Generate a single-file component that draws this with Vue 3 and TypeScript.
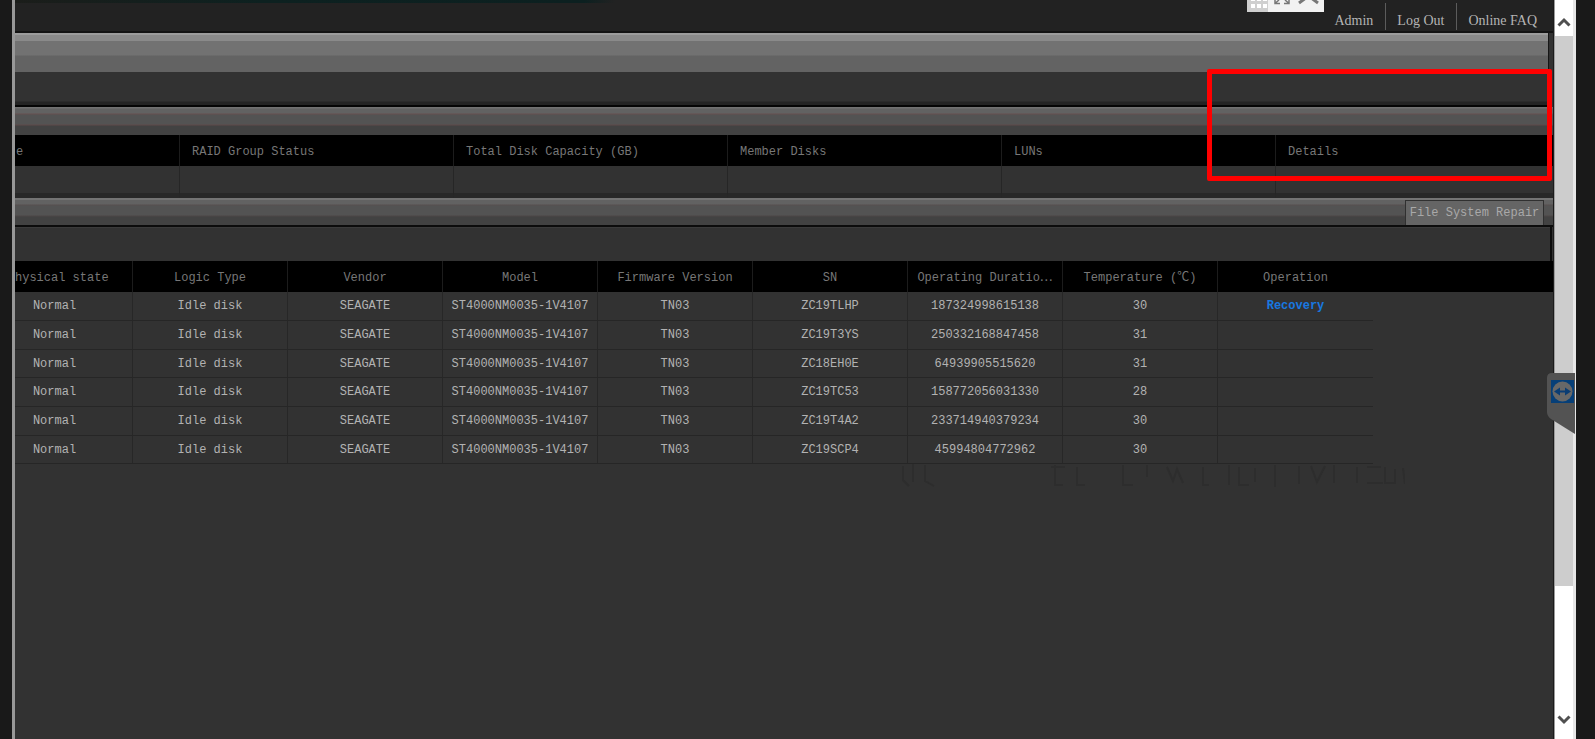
<script setup lang="ts">
interface Disk {
  state: string
  logic: string
  vendor: string
  model: string
  firmware: string
  sn: string
  duration: string
  temperature: number
  recoverable?: boolean
}

const base = { state: 'Normal', logic: 'Idle disk', vendor: 'SEAGATE', model: 'ST4000NM0035-1V4107', firmware: 'TN03' }

const disks: Disk[] = [
  { ...base, sn: 'ZC19TLHP', duration: '187324998615138', temperature: 30, recoverable: true },
  { ...base, sn: 'ZC19T3YS', duration: '250332168847458', temperature: 31 },
  { ...base, sn: 'ZC18EH0E', duration: '64939905515620', temperature: 31 },
  { ...base, sn: 'ZC19TC53', duration: '158772056031330', temperature: 28 },
  { ...base, sn: 'ZC19T4A2', duration: '233714940379234', temperature: 30 },
  { ...base, sn: 'ZC19SCP4', duration: '45994804772962', temperature: 30 },
]

const groupColumns = ['e', 'RAID Group Status', 'Total Disk Capacity (GB)', 'Member Disks', 'LUNs', 'Details']
const diskColumns = [
  'hysical state', 'Logic Type', 'Vendor', 'Model', 'Firmware Version', 'SN',
  'Operating Duratio⋯', 'Temperature (℃)', 'Operation', '',
]
</script>

<template>
  <div class="screen">
    <div class="window">
      <main class="content">
        <header class="topbar">
          <nav class="links">
            <a href="#">Admin</a>
            <a href="#">Log Out</a>
            <a href="#">Online FAQ</a>
          </nav>
        </header>
        <div class="banner"></div>
        <div class="spacer first"></div>

        <div class="bar"></div>
        <table class="groups">
          <thead>
            <tr><th v-for="c in groupColumns" :key="c">{{ c }}</th></tr>
          </thead>
          <tbody>
            <tr><td v-for="c in groupColumns" :key="c"></td></tr>
          </tbody>
        </table>

        <div class="bar with-tab"><button type="button" class="repair">File System Repair</button></div>
        <div class="spacer second"></div>
        <table class="disks">
          <thead>
            <tr><th v-for="c in diskColumns" :key="c">{{ c }}</th></tr>
          </thead>
          <tbody>
            <tr v-for="d in disks" :key="d.sn">
              <td>{{ d.state }}</td>
              <td>{{ d.logic }}</td>
              <td>{{ d.vendor }}</td>
              <td>{{ d.model }}</td>
              <td>{{ d.firmware }}</td>
              <td>{{ d.sn }}</td>
              <td>{{ d.duration }}</td>
              <td>{{ d.temperature }}</td>
              <td><a v-if="d.recoverable" href="#" class="recovery">Recovery</a></td>
              <td></td>
            </tr>
          </tbody>
        </table>
        <svg class="residue" width="520" height="32" viewBox="0 0 520 32" aria-hidden="true">
          <path d="M18 6v14l6 6M28 4v18M40 5v16l9 5M170 5v20h8M166 7h14M192 7v18h8M238 5v20h10M262 5v12M282 7l6 14 4-12 6 14M318 7v18h6M344 5v20M354 7v18h10M370 8v14M390 5v22M414 6v18M426 6l6 16 8-16M449 5v18M472 7v16M482 7h14M482 23h16M500 7v16h10v-14M518 8l2 16" />
        </svg>
      </main>

      <div class="scrollbar">
        <button type="button" aria-label="Scroll up">
          <svg width="14" height="12" viewBox="0 0 14 12"><path d="M1.500 9.500L7 4L12.500 9.500" /></svg>
        </button>
        <div class="track"><div class="thumb"></div></div>
        <button type="button" aria-label="Scroll down">
          <svg width="14" height="12" viewBox="0 0 14 12"><path d="M1.500 2.500L7 8L12.500 2.500" /></svg>
        </button>
      </div>
    </div>

    <svg class="remote-tools" width="77" height="12" viewBox="0 0 77 12" aria-hidden="true">
      <rect width="77" height="12" fill="#f2f2f2" />
      <rect width="21" height="12" fill="#cfcfcf" />
      <g fill="#fff">
        <rect x="4" y="-3" width="4" height="4" /><rect x="10" y="-3" width="4" height="4" /><rect x="16" y="-3" width="4" height="4" />
        <rect x="4" y="4" width="4" height="4" /><rect x="10" y="4" width="4" height="4" /><rect x="16" y="4" width="4" height="4" />
      </g>
      <path d="M28 -1V3.500H33M28.500 3L32 0M42 -1V3.500H37M41.500 3L38 0" fill="none" stroke="#777" stroke-width="1.500" />
      <path d="M52 3L61.500 -4L71 3" fill="none" stroke="#777" stroke-width="3" />
    </svg>

    <svg class="remote-tab" width="28" height="61" viewBox="0 0 28 61" aria-hidden="true">
      <path d="M5 0H28V61L4 46Q0 43 0 39V5Q0 0 5 0Z" fill="#535353" />
      <rect x="4" y="7" width="23" height="23" fill="#063f78" />
      <circle cx="15.500" cy="18.500" r="10" fill="#686868" />
      <path d="M7 18.500L13 14.500V17.500H18V14.500L24 18.500L18 22.500V19.500H13V22.500Z" fill="#0a3d74" />
    </svg>

    <div class="highlight"></div>
  </div>
</template>

<style>
body { background: #191919; }
</style>

<style scoped>
.screen {
  position: relative;
  height: 100vh;
  padding: 0 19px 0 12px;
  box-sizing: border-box;
  overflow: hidden;
  background: #191919;
  font-family: "Liberation Mono", "Noto Sans CJK SC", monospace;
  font-size: 12px;
}
.window {
  display: flex;
  height: 100%;
  box-sizing: border-box;
  border-left: 3px solid #989898;
  background: #323232;
}
.content {
  flex: 1;
  min-width: 0;
  overflow: hidden;
  border-right: 1px solid #1b1b1b;
}
.topbar {
  display: flex;
  justify-content: flex-end;
  height: 33px;
  box-sizing: border-box;
  padding: 3px 4px 0 0;
  border-bottom: 2px solid #131313;
  background: linear-gradient(90deg, #1b1d1a, #0d2120 16%, #0c2020 37%, #222 39%) 0 0 / 100% 3px no-repeat, #222;
}
.links { display: flex; height: 27px; }
.links a {
  padding: 0 12px 0 11px;
  color: #b4b4b4;
  font-family: "Liberation Serif", serif;
  font-size: 14px;
  line-height: 36px;
  text-decoration: none;
  white-space: nowrap;
}
.links a + a { border-left: 1px solid #5c5c5c; }
.banner {
  height: 39px;
  margin-right: 4px;
  border-right: 1px solid #161616;
  background: linear-gradient(#9c9c9c 2px, #8a8a8a 2px 8px, #727272 8px 22px, #636363 23px);
}
.spacer {
  box-sizing: border-box;
  margin-right: 1px;
  border-right: 2px solid #0c0c0c;
}
.spacer.first {
  height: 35px;
  background: linear-gradient(#323232 29px, #242424 30px 33px, #050505 33px);
}
.spacer.second {
  height: 34px;
  background: linear-gradient(#3b3b3b 1px, #323232 1px);
}
.bar {
  display: flex;
  justify-content: flex-end;
  height: 28px;
  box-sizing: border-box;
  background: linear-gradient(#727272 1px, #626262 2px 6px, #664f4f 7px, #535353 8px 17px, #5e4949 18px, #424242 19px);
}
.bar.with-tab {
  height: 29px;
  padding: 2px 9px 0 0;
  border-bottom: 2px solid #0c0c0c;
  background: linear-gradient(#747474 2px, #626262 2px 6px, #574f4f 7px, #535353 8px 17px, #4c4646 18px, #424242 19px);
}
.repair {
  width: 139px;
  height: 25px;
  padding: 0;
  border: 1px solid #303030;
  border-bottom: 0;
  background: #656565;
  color: #a9a9a9;
  font: inherit;
  white-space: nowrap;
}
table {
  table-layout: fixed;
  width: 100%;
  border-collapse: separate;
  border-spacing: 0;
  line-height: 14px;
}
th, td {
  box-sizing: border-box;
  padding: 0;
  white-space: nowrap;
}
th {
  padding-top: 2px;
  background: #000;
  color: #777;
  font-weight: 400;
}
.groups th {
  width: 274px;
  height: 31px;
  padding-left: 12px;
  text-align: left;
  border-left: 1px solid #1c1c1c;
}
.groups td {
  height: 32px;
  border-left: 1px solid #262626;
  border-bottom: 5px solid #282828;
}
.groups th:first-child { width: 164px; padding-left: 1px; border-left: 0; }
.groups th:last-child { width: auto; }
.groups td:first-child { border-left: 0; }
.disks th {
  width: 155px;
  height: 31px;
  border-right: 1px solid #1c1c1c;
}
.disks td {
  height: 29px;
  border-right: 1px solid #272727;
  border-bottom: 1px solid #262626;
  color: #b2b2b2;
  text-align: center;
}
.disks tr:nth-child(3n) td { height: 28px; }
.disks th:first-child { width: 118px; }
.disks th:first-child, .disks td:first-child { padding-right: 38px; }
.disks th:last-child { width: auto; border-right: 0; }
.disks td:last-child { border: 0; }
.disks th:nth-child(9), .disks td:nth-child(9) { border-right: 0; }
.recovery { color: #1878e0; font-weight: 700; text-decoration: none; }
.residue {
  display: block;
  margin: -4px 148px 0 auto;
  fill: none;
  stroke: #2d2d2d;
  stroke-width: 2;
}
.scrollbar {
  display: flex;
  flex-direction: column;
  flex: none;
  width: 22px;
  box-sizing: border-box;
  border-left: 1px solid #9a9a9a;
  border-right: 3px solid #e6e6e6;
  background: #fff;
}
.scrollbar button {
  display: flex;
  align-items: flex-end;
  justify-content: center;
  height: 36px;
  padding: 0 0 8px;
  border: 0;
  background: #fff;
}
.scrollbar button:last-child { padding: 0 0 13px; }
.scrollbar svg { fill: none; stroke: #505050; stroke-width: 3; }
.track { flex: 1; }
.thumb { height: 82.4%; background: #cdcdcd; }
.remote-tools { position: absolute; top: 0; right: 271px; }
.remote-tab { position: absolute; top: 373px; right: 20px; }
.highlight {
  position: absolute;
  top: 69px;
  right: 43px;
  width: 345px;
  height: 112px;
  box-sizing: border-box;
  border: 5px solid #f00;
  border-radius: 2px;
  pointer-events: none;
}
</style>
